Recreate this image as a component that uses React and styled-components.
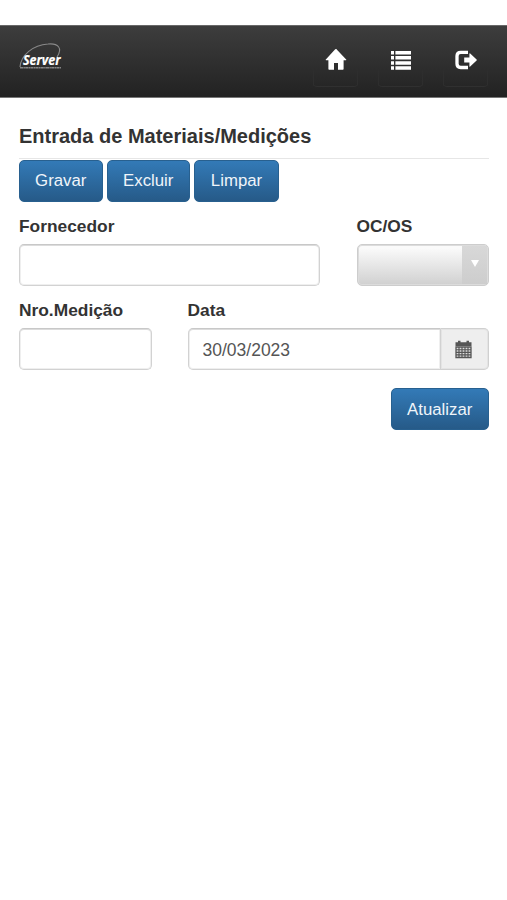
import React from "react";
import styled, { createGlobalStyle } from "styled-components";

const GlobalStyle = createGlobalStyle`
  * { box-sizing: border-box; }
  body {
    margin: 0;
    background: #fff;
    color: #333;
    font-family: "Liberation Sans", Arial, sans-serif;
    font-size: 17px;
  }
`;

const Page = styled.div`
  min-height: 900px;
  padding-top: 25px;
`;

const Navbar = styled.header`
  height: 73px;
  display: flex;
  align-items: flex-start;
  justify-content: space-between;
  padding: 8px 18px 0 18px;
  background: linear-gradient(#3d3d3d, #222);
  border-top: 1px solid #686868;
  border-bottom: 1px solid #777;
`;

const Logo = styled.svg`
  width: 46px;
  height: 30px;
  margin-top: 8px;
  overflow: visible;
`;

const NavActions = styled.nav`
  display: flex;
  gap: 18px;
`;

const NavButton = styled.button`
  width: 47px;
  height: 53px;
  display: flex;
  justify-content: center;
  padding: 12px 0 0;
  color: #fff;
  border: 1px solid transparent;
  border-bottom-color: #303030;
  border-radius: 5px;
  background:
    linear-gradient(transparent 60%, #ffffff0a) left / 1px 100% no-repeat,
    linear-gradient(transparent 60%, #ffffff0a) right / 1px 100% no-repeat;
  svg { width: 24px; height: 24px; }
  &:first-child svg { position: relative; left: 0.5px; }
`;

const Content = styled.main`
  padding: 27px 18px 0 19px;
`;

const Title = styled.h1`
  height: 34px;
  margin: 0;
  font-size: 20px;
  line-height: 22px;
  border-bottom: 1px solid #e6e6e6;
`;

const Toolbar = styled.div`
  display: flex;
  gap: 4px;
  justify-content: ${(p) => (p.$end ? "flex-end" : "flex-start")};
  margin-top: ${(p) => (p.$end ? "18px" : "0.5px")};
`;

const Button = styled.button`
  width: ${(p) => p.$width}px;
  height: 42px;
  padding: 1px 0 0;
  font: 16.8px "Liberation Sans", Arial, sans-serif;
  color: #f0f5fa;
  background: linear-gradient(#337ab7, #265a88);
  border: 1px solid #28608f;
  border-radius: 5px;
`;

const Row = styled.div`
  display: grid;
  grid-template-columns: ${(p) => p.$columns};
  justify-content: space-between;
  margin-top: ${(p) => p.$top}px;
`;

const Field = styled.div`
  min-width: 0;
`;

const Label = styled.label`
  display: block;
  height: 27px;
  font-size: 17.35px;
  font-weight: bold;
  line-height: 19px;
`;

const Input = styled.input`
  display: block;
  width: 100%;
  min-width: 0;
  height: 42px;
  padding: 2px 14px 0;
  font: 17.5px "Liberation Sans", Arial, sans-serif;
  color: #555;
  background: #fff;
  border: 1px solid #d2d2d2;
  border-top-color: #c8c8c8;
  border-radius: ${(p) => (p.$joined ? "5px 0 0 5px" : "5px")};
  box-shadow: inset 0 1px 0 #dcdcdc, inset 0 0 0 1px #efefef;
  outline: 0;
`;

const InputGroup = styled.div`
  display: grid;
  grid-template-columns: 1fr 48px;
`;

const DateButton = styled.button`
  display: grid;
  place-items: center;
  height: 42px;
  padding: 0 2px 0 0;
  color: #555;
  background: #eee;
  border: 1px solid #d0d0d0;
  border-left: 0;
  border-radius: 0 5px 5px 0;
  box-shadow: inset 0 0 0 1px #e4e4e4;
`;

const Select = styled.button`
  width: 100%;
  height: 42px;
  display: flex;
  justify-content: flex-end;
  padding: 1px;
  overflow: hidden;
  background: linear-gradient(#fafafa 8%, #d0d0d0);
  border: 1px solid #cdcdcd;
  border-radius: 5px;
  box-shadow: inset 0 0 0 1px #dcdcdc;
`;

const SelectArrow = styled.span`
  width: 25px;
  height: 100%;
  display: flex;
  align-items: center;
  justify-content: center;
  padding-bottom: 4px;
  background: linear-gradient(#d8d8d8, #cdcdcd);
  &::after {
    content: "";
    border: solid transparent;
    border-width: 7px 4px 0;
    border-top-color: #fff;
  }
`;

function ServerLogo() {
  return (
    <Logo viewBox="0 0 46 30" aria-label="Server">
      <path d="M2 25C3 13 15 3 30 2C40 1 45 6 39 15" fill="none" stroke="#888" strokeWidth="1.1" />
      <path d="M2 25.8H43" stroke="#858585" strokeWidth="1.5" strokeDasharray="3 .4 1.5 .3" />
      <text x="5" y="22.5" textLength="37.5" lengthAdjust="spacingAndGlyphs" fill="#fff" stroke="#fff" strokeWidth=".2" fontFamily="Open Sans, sans-serif" fontSize="14.2" fontWeight="700" fontStyle="italic">Server</text>
    </Logo>
  );
}

function HomeIcon() {
  return (
    <svg viewBox="0 0 24 24" fill="currentColor" aria-hidden="true">
      <path d="M12 1.8 22.2 12.6Q22.8 13.3 21.8 13.3H19.6V22Q19.6 22.7 18.9 22.7H14V16H10V22.7H5.1Q4.4 22.7 4.4 22V13.3H2.2Q1.2 13.3 1.8 12.6L11.2 2.3Q12 1.5 12.8 2.3Z" />
    </svg>
  );
}

function ListIcon() {
  return (
    <svg viewBox="0 0 24 24" fill="currentColor" aria-hidden="true">
      <path d="M2 4h3v3.5H2zM2 9.1h3v3.5H2zM2 14.2h3v3.5H2zM2 19.3h3v3.5H2zM6.4 4H22v3.5H6.4zM6.4 9.1H22v3.5H6.4zM6.4 14.2H22v3.5H6.4zM6.4 19.3H22v3.5H6.4z" />
    </svg>
  );
}

function ExitIcon() {
  return (
    <svg viewBox="0 0 24 24" aria-hidden="true">
      <path d="M14 5.3H6.7Q3 5.3 3 9v7.8q0 3.7 3.7 3.7H14" fill="none" stroke="currentColor" strokeWidth="3.3" />
      <path d="M10.2 10.5h5.2V6.8q0-.8.8-.2l6.4 6q.5.5 0 1l-6.4 6q-.8.6-.8-.2v-3.8h-5.2z" fill="currentColor" />
    </svg>
  );
}

function CalendarIcon() {
  return (
    <svg width="17" height="19" viewBox="0 0 17 19" aria-hidden="true">
      <path d="M.5 2.2H3V.8h2.5v1.4h6V.8H14v1.4h2.5V6H.5z" fill="currentColor" />
      <path d="M1 7h15v10.5H1z" fill="#ddd" stroke="currentColor" strokeWidth="1.3" />
      <path d="M1 9.7h15M1 12.3h15M1 14.9h15M4 7v10.5M7 7v10.5M10 7v10.5M13 7v10.5" fill="none" stroke="currentColor" strokeWidth="1.15" />
    </svg>
  );
}

export default function App() {
  return (
    <>
      <GlobalStyle />
      <Page>
        <Navbar>
          <ServerLogo />
          <NavActions>
            <NavButton aria-label="Início"><HomeIcon /></NavButton>
            <NavButton aria-label="Menu"><ListIcon /></NavButton>
            <NavButton aria-label="Sair"><ExitIcon /></NavButton>
          </NavActions>
        </Navbar>
        <Content>
          <Title>Entrada de Materiais/Medições</Title>
          <Toolbar>
            <Button $width={83.5}>Gravar</Button>
            <Button $width={83.5}>Excluir</Button>
            <Button $width={85}>Limpar</Button>
          </Toolbar>
          <Row $columns="301px 132.5px" $top={15.5}>
            <Field>
              <Label htmlFor="supplier">Fornecedor</Label>
              <Input id="supplier" />
            </Field>
            <Field>
              <Label>OC/OS</Label>
              <Select aria-label="OC/OS"><SelectArrow /></Select>
            </Field>
          </Row>
          <Row $columns="132.5px 301.5px" $top={15}>
            <Field>
              <Label htmlFor="measurement">Nro.Medição</Label>
              <Input id="measurement" />
            </Field>
            <Field>
              <Label htmlFor="date">Data</Label>
              <InputGroup>
                <Input id="date" $joined defaultValue="30/03/2023" />
                <DateButton aria-label="Calendário"><CalendarIcon /></DateButton>
              </InputGroup>
            </Field>
          </Row>
          <Toolbar $end>
            <Button $width={98.5}>Atualizar</Button>
          </Toolbar>
        </Content>
      </Page>
    </>
  );
}
